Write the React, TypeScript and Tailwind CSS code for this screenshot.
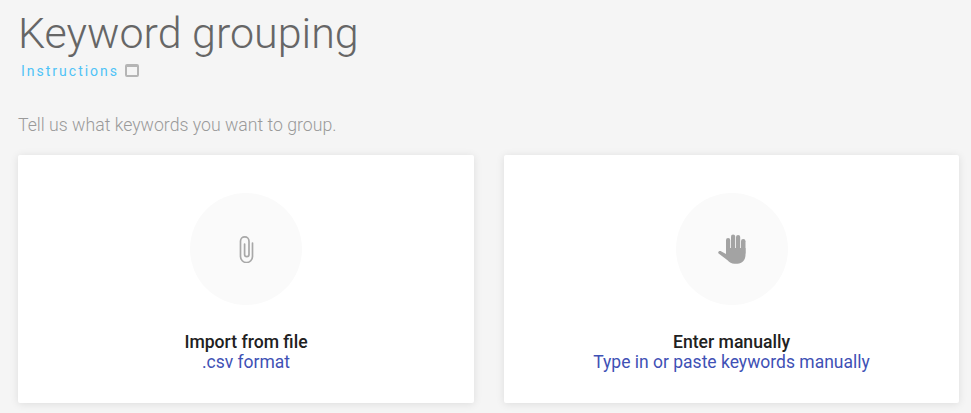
function Paperclip() {
  return (
    <svg width="15" height="27" viewBox="0 0 15 27" fill="none" stroke="#a8a8a8" strokeWidth="1.7" strokeLinecap="round">
      <path d="M13.5 7V20.5a6 6 0 0 1-12 0V5.2a4.25 4.25 0 0 1 8.5 0V18.5a2.2 2.2 0 0 1-4.4 0V8" />
    </svg>
  );
}

function Hand() {
  return (
    <svg width="28" height="30" viewBox="0 0 28 30" fill="#a3a3a3">
      <rect x="8" y="4" width="4.2" height="18" rx="2.1" />
      <rect x="13" y="0.5" width="4.2" height="18" rx="2.1" />
      <rect x="18" y="1" width="4.2" height="18" rx="2.1" />
      <rect x="23" y="5" width="4.5" height="16" rx="2.2" />
      <path d="M8 14H27.5V21c0 5-3.5 8.7-8 8.7h-3c-3 0-5-1.2-7-3.5L.6 19.5c-.6-.6-.5-1.5.1-2 .7-.6 1.8-.6 2.7-.1L8 20z" />
    </svg>
  );
}

function Card({ icon, title, sub }: { icon: React.ReactNode; title: string; sub: string }) {
  return (
    <div className="bg-white h-[248px] rounded-[2px] shadow-[0_1px_8px_rgba(0,0,0,0.1)] flex flex-col items-center pt-[38px]">
      <div className="w-[112px] h-[112px] rounded-full bg-[#fafafa] flex items-center justify-center">{icon}</div>
      <div className="mt-[27px] text-[17.6px] leading-[20px] font-medium text-[#212121]">{title}</div>
      <div className="text-[17.5px] leading-[20px] text-[#3f51b5]">{sub}</div>
    </div>
  );
}

export default function App() {
  return (
    <div className="h-[413px] bg-[#f5f5f5] pl-[18px] pr-[12px] font-['Roboto',sans-serif] overflow-hidden">
      <h1 className="text-[43px] leading-[50px] pt-[8px] font-light text-[#666666] h-[58px]">Keyword grouping</h1>
      <div className="flex items-center mt-[3px] h-[20px] pl-[3px]">
        <span className="text-[14px] font-normal tracking-[2px] text-[#4fc3f7]">Instructions</span>
        <span className="ml-[6px] mb-[2px] w-[14px] h-[13px] border-2 border-t-[3px] border-[#b5b5b5] rounded-[2px]" />
      </div>
      <p className="mt-[34px] text-[17.7px] leading-[20px] font-light text-[#9a9a9a]">Tell us what keywords you want to group.</p>
      <div className="grid grid-cols-[456px_455px] gap-[30px] mt-[20px]">
        <Card icon={<Paperclip />} title="Import from file" sub=".csv format" />
        <Card icon={<Hand />} title="Enter manually" sub="Type in or paste keywords manually" />
      </div>
    </div>
  );
}
